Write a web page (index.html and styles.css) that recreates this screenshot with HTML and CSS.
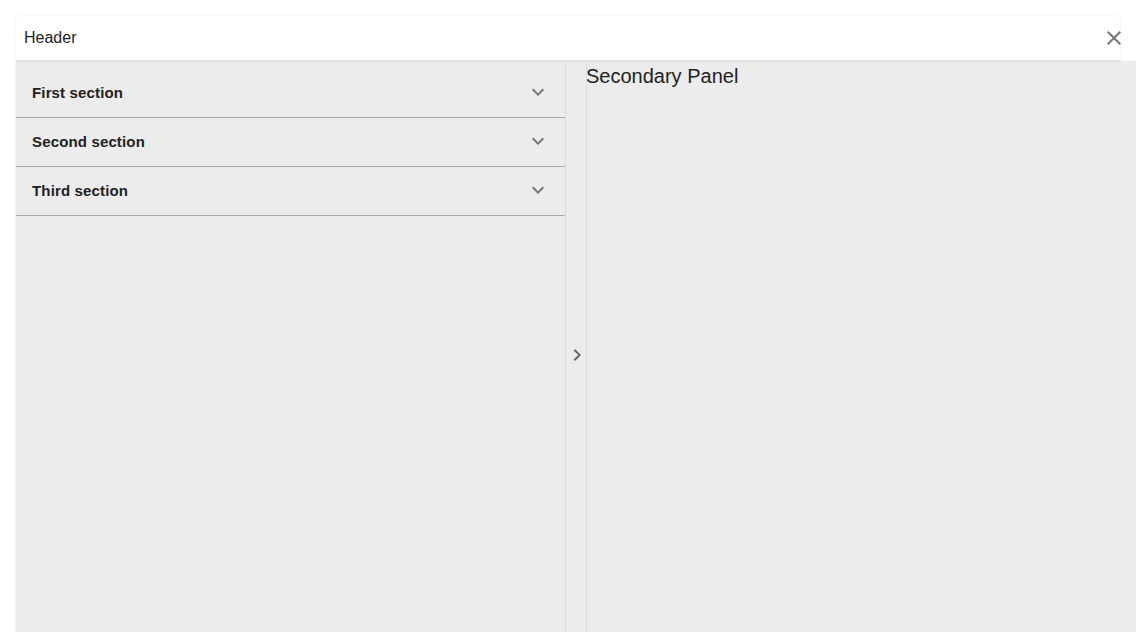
FILE: index.html
```html
<!DOCTYPE html>
<html>
<head>
<meta charset="utf-8">
<title>Layout</title>
<link rel="stylesheet" href="styles.css">
</head>
<body>
<div class="app">
  <header class="header">
    <span class="header-title">Header</span>
    <button class="close-btn" aria-label="Close">
      <svg viewBox="0 0 24 24" width="24" height="24"><path d="M19 6.41L17.59 5 12 10.59 6.41 5 5 6.41 10.59 12 5 17.59 6.41 19 12 13.41 17.59 19 19 17.59 13.41 12z"/></svg>
    </button>
  </header>
  <div class="main">
    <div class="primary">
      <div class="acc-item">
        <span class="acc-title">First section</span>
        <svg class="acc-icon" viewBox="0 0 24 24" width="24" height="24"><path d="M16.59 8.59L12 13.17 7.41 8.59 6 10l6 6 6-6z"/></svg>
      </div>
      <div class="acc-item">
        <span class="acc-title">Second section</span>
        <svg class="acc-icon" viewBox="0 0 24 24" width="24" height="24"><path d="M16.59 8.59L12 13.17 7.41 8.59 6 10l6 6 6-6z"/></svg>
      </div>
      <div class="acc-item acc-last">
        <span class="acc-title">Third section</span>
        <svg class="acc-icon" viewBox="0 0 24 24" width="24" height="24"><path d="M16.59 8.59L12 13.17 7.41 8.59 6 10l6 6 6-6z"/></svg>
      </div>
    </div>
    <div class="splitter">
      <svg class="split-icon" viewBox="0 0 24 24" width="24" height="24"><path d="M10 6L8.59 7.41 13.17 12l-4.58 4.59L10 18l6-6z"/></svg>
    </div>
    <div class="secondary">
      <div class="secondary-title">Secondary Panel</div>
    </div>
  </div>
</div>
</body>
</html>
```

FILE: styles.css
```css
html, body {
  margin: 0;
  padding: 0;
  background: #ffffff;
  overflow: hidden;
  font-family: "Liberation Sans", Arial, sans-serif;
  color: #222222;
}

.app {
  margin: 16px 0 0 16px;
  width: 1120px;
  height: 632px;
  display: flex;
  flex-direction: column;
}

.header {
  width: 1104px;
  height: 44px;
  box-sizing: content-box;
  background: #ffffff;
  border-bottom: 1px solid #dcdcdc;
  border-radius: 4px 4px 0 0;
  box-shadow: 0 0 3px rgba(0, 0, 0, 0.08);
  display: flex;
  align-items: center;
  justify-content: space-between;
  padding: 0;
  flex: none;
  position: relative;
  z-index: 1;
}

.header-title {
  font-size: 16px;
  margin-left: 8px;
  color: #222222;
}

.close-btn {
  border: 0;
  background: transparent;
  padding: 0;
  margin-right: -6px;
  width: 24px;
  height: 24px;
  display: flex;
  fill: #777777;
  cursor: pointer;
}

.main {
  flex: 1;
  display: flex;
  background: #ececec;
  box-shadow: -1px 0 2px rgba(0, 0, 0, 0.06);
  min-height: 0;
}

.primary {
  width: 549px;
  padding-top: 8px;
  flex: none;
}

.acc-item {
  height: 46px;
  border-bottom: 1px solid #a9a9a9;
  display: flex;
  align-items: center;
  justify-content: space-between;
  padding: 0 15px 2px 16px;
}

.acc-last {
  border-bottom-right-radius: 2px;
}

.acc-title {
  font-size: 15px;
  font-weight: bold;
  letter-spacing: 0.15px;
  color: #222222;
}

.acc-icon {
  fill: #757575;
  flex: none;
}

.splitter {
  width: 20px;
  margin-top: 1px;
  border-left: 1px solid #d9d9d9;
  border-right: 1px solid #d9d9d9;
  border-radius: 4px 4px 0 0;
  display: flex;
  align-items: center;
  justify-content: center;
  flex: none;
}

.split-icon {
  fill: #666666;
  flex: none;
  margin-left: 1px;
}

.secondary {
  flex: 1;
  padding-top: 4px;
  margin-left: -1px;
}

.secondary-title {
  font-size: 20px;
  color: #222222;
}
```
